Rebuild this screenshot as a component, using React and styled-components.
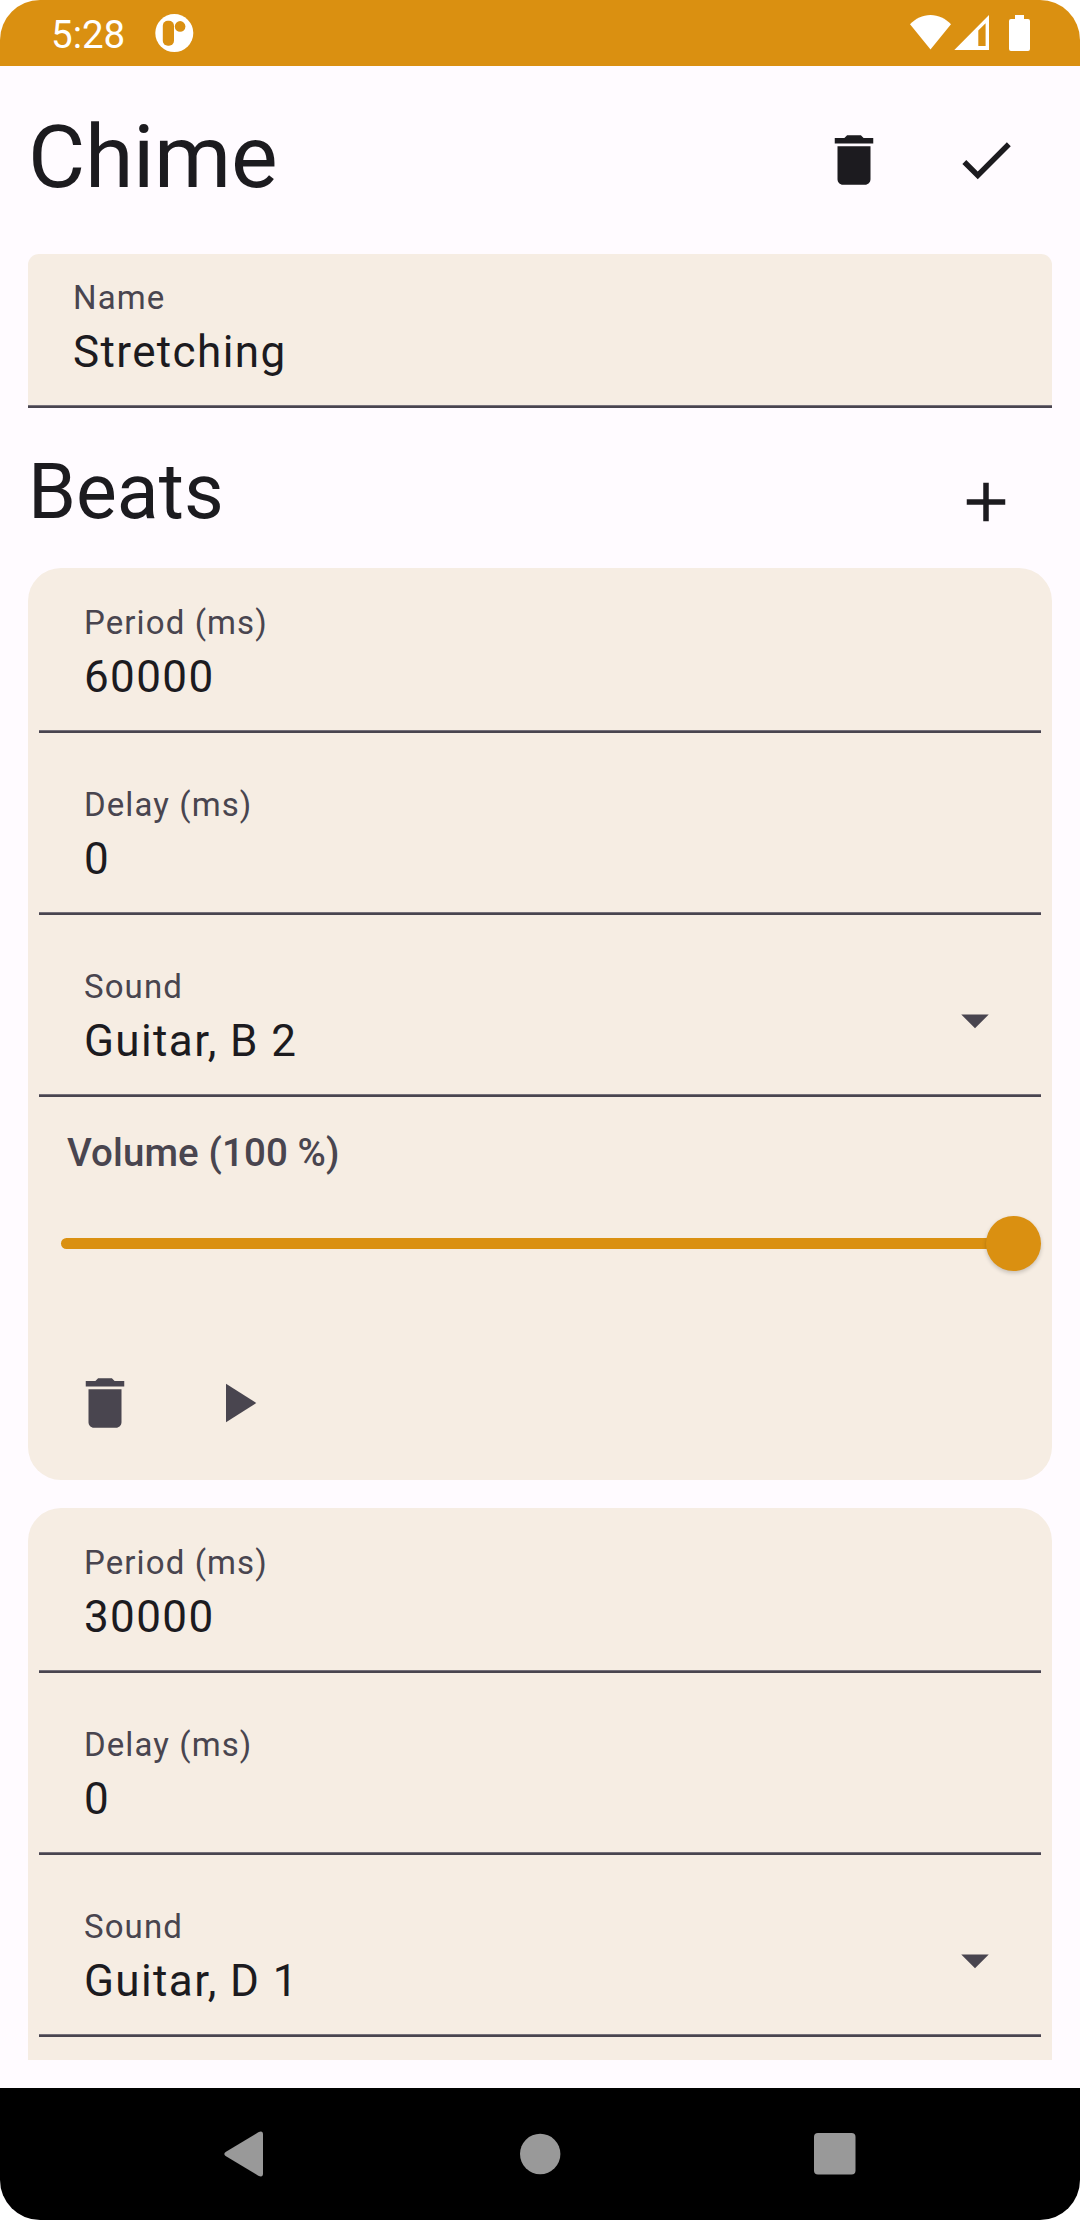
import React from 'react';
import styled, { createGlobalStyle } from 'styled-components';

const color = {
  primary: '#da9011',
  background: '#fffbff',
  surface: '#f6ede3',
  text: '#1c1b1f',
  muted: '#49454f',
  nav: '#999999',
};

const GlobalStyle = createGlobalStyle`
  * { box-sizing: border-box; }
  body { margin: 0; background: #fff; }
`;

const Screen = styled.div`
  width: 1080px;
  height: 2220px;
  display: flex;
  flex-direction: column;
  overflow: hidden;
  border-radius: 40px;
  background: ${color.background};
  color: ${color.text};
  font-family: Roboto, 'Liberation Sans', sans-serif;
`;

const StatusBar = styled.header`
  flex: none;
  height: 66px;
  padding: 0 50px 0 51px;
  display: flex;
  align-items: center;
  justify-content: space-between;
  background: ${color.primary};
  color: #fff;
`;

const StatusGroup = styled.div`
  display: flex;
  align-items: center;
  height: 66px;
`;

const Clock = styled.span`
  width: 104px;
  font-size: 38.5px;
  line-height: 65px;
  margin-top: 3px;
`;

const Glyph = styled.svg`
  display: block;
  flex: none;
  fill: currentColor;
`;

const Content = styled.main`
  flex: 1;
  min-height: 0;
  display: flex;
  flex-direction: column;
  gap: 28px;
  padding: 28px;
`;

const TitleRow = styled.div`
  flex: none;
  height: 132px;
  display: flex;
  align-items: flex-start;
`;

const Title = styled.h1`
  flex: 1;
  margin: 8px 0 0;
  font-weight: 400;
  font-size: 88px;
  line-height: 110px;
  letter-spacing: -0.35px;
`;

const Subtitle = styled.h2`
  flex: 1;
  margin: 7px 0 0;
  font-weight: 400;
  font-size: 77px;
  line-height: 99px;
`;

const IconButton = styled.button`
  width: 132px;
  height: 132px;
  padding: 0;
  border: 0;
  background: none;
  color: inherit;
  display: flex;
  align-items: center;
  justify-content: center;
`;

const Field = styled.div`
  flex: none;
  height: 154px;
  padding-left: 45px;
  display: flex;
  align-items: stretch;
  justify-content: space-between;
  border-radius: 11px 11px 0 0;
  background:
    linear-gradient(${color.muted}, ${color.muted}) bottom / 100% 2px no-repeat,
    linear-gradient(#757079, #757079) bottom / 100% 3px no-repeat,
    ${color.surface};
`;

const FieldText = styled.div`
  padding-top: 22px;
  display: flex;
  flex-direction: column;
`;

const FieldLabel = styled.span`
  font-size: 33px;
  line-height: 44px;
  letter-spacing: 1.1px;
  color: ${color.muted};
`;

const FieldValue = styled.span`
  font-size: 44px;
  line-height: 64px;
  letter-spacing: 1.375px;
`;

const DropdownSlot = styled.span`
  width: 132px;
  display: flex;
  align-items: center;
  justify-content: center;
  color: ${color.muted};
`;

const BeatSection = styled.section`
  flex: 1;
  min-height: 0;
  display: flex;
  flex-direction: column;
`;

const BeatList = styled.div`
  flex: 1;
  min-height: 0;
  overflow: hidden;
  display: flex;
  flex-direction: column;
  gap: 28px;
`;

const Card = styled.article`
  flex: none;
  height: 912px;
  padding: 11px;
  border-radius: 33px;
  background: ${color.surface};
  display: flex;
  flex-direction: column;
`;

const CardFields = styled.div`
  display: flex;
  flex-direction: column;
  gap: 28px;
`;

const VolumeLabel = styled.span`
  margin: 28px 0 0 28px;
  font-size: 38.5px;
  font-weight: 500;
  line-height: 55px;
  letter-spacing: 0.1px;
  color: ${color.muted};
`;

const Slider = styled.div`
  position: relative;
  height: 127px;
  padding: 0 28px 0 21.5px;
  display: flex;
  align-items: center;
`;

const Track = styled.div`
  flex: 1;
  height: 11px;
  border-radius: 6px;
  background: ${color.primary};
`;

const Thumb = styled.div`
  position: absolute;
  right: 0;
  top: 36px;
  width: 55px;
  height: 55px;
  border-radius: 50%;
  background: ${color.primary};
  box-shadow: 0 2px 4px rgba(0, 0, 0, 0.2);
`;

const Actions = styled.div`
  margin-top: 30px;
  display: flex;
  color: ${color.muted};
`;

const NavBar = styled.nav`
  flex: none;
  height: 132px;
  padding: 0 224px;
  display: flex;
  align-items: center;
  justify-content: space-between;
  background: #000;
  color: ${color.nav};
`;

const paths = {
  trash: 'M6 19c0 1.1.9 2 2 2h8c1.1 0 2-.9 2-2V7H6v12zM19 4h-3.5l-1-1h-5l-1 1H5v2h14V4z',
  check: 'M9 16.17L4.83 12l-1.42 1.41L9 19 21 7l-1.41-1.41z',
  plus: 'M19 13h-6v6h-2v-6H5v-2h6V5h2v6h6v2z',
  play: 'M8 5v14l11-7z',
  dropdown: 'M7 10l5 5 5-5z',
};

function Icon({ name }) {
  return (
    <Glyph width="66" height="66" viewBox="0 0 24 24">
      <path d={paths[name]} />
    </Glyph>
  );
}

function TextField({ label, value, dropdown }) {
  return (
    <Field>
      <FieldText>
        <FieldLabel>{label}</FieldLabel>
        <FieldValue>{value}</FieldValue>
      </FieldText>
      {dropdown && (
        <DropdownSlot>
          <Icon name="dropdown" />
        </DropdownSlot>
      )}
    </Field>
  );
}

function BeatControls({ volume }) {
  return (
    <>
      <VolumeLabel>Volume ({volume} %)</VolumeLabel>
      <Slider>
        <Track />
        <Thumb />
      </Slider>
      <Actions>
        <IconButton aria-label="Delete beat"><Icon name="trash" /></IconButton>
        <IconButton aria-label="Play beat"><Icon name="play" /></IconButton>
      </Actions>
    </>
  );
}

function BeatCard({ period, delay, sound, volume, controls }) {
  return (
    <Card>
      <CardFields>
        <TextField label="Period (ms)" value={period} />
        <TextField label="Delay (ms)" value={delay} />
        <TextField label="Sound" value={sound} dropdown />
      </CardFields>
      {controls && <BeatControls volume={volume} />}
    </Card>
  );
}

const beats = [
  { period: '60000', delay: '0', sound: 'Guitar, B 2', volume: 100, controls: true },
  { period: '30000', delay: '0', sound: 'Guitar, D 1', volume: 100, controls: false },
];

export default function App() {
  return (
    <>
      <GlobalStyle />
      <Screen>
        <StatusBar>
          <StatusGroup>
            <Clock>5:28</Clock>
            <Glyph width="39" height="66" viewBox="0 0 39 66">
              <circle cx="19.3" cy="33.1" r="19" />
              <rect x="7.8" y="20.8" width="11.200" height="25" rx="5" fill={color.primary} />
              <circle cx="25.1" cy="26.4" r="5.3" fill={color.primary} />
            </Glyph>
          </StatusGroup>
          <StatusGroup>
            <Glyph width="120" height="66" viewBox="910 0 120 66">
              <path d="M930.5 49.5L910 24.3C915.5 18.6 922.5 15 930.5 15S945.5 18.6 951 24.3z" />
              <path fillRule="evenodd" d="M954.3 50L989 15v35zM978.3 30.6V46h7.3V23.3z" />
              <path d="M1015 15h9v4h4a2 2 0 0 1 2 2v28a2 2 0 0 1-2 2h-17a2 2 0 0 1-2-2V21a2 2 0 0 1 2-2h4z" />
            </Glyph>
          </StatusGroup>
        </StatusBar>

        <Content>
          <TitleRow>
            <Title>Chime</Title>
            <IconButton aria-label="Delete chime"><Icon name="trash" /></IconButton>
            <IconButton aria-label="Save chime"><Icon name="check" /></IconButton>
          </TitleRow>
          <TextField label="Name" value="Stretching" />
          <BeatSection>
            <TitleRow>
              <Subtitle>Beats</Subtitle>
              <IconButton aria-label="Add beat"><Icon name="plus" /></IconButton>
            </TitleRow>
            <BeatList>
              {beats.map((beat) => (
                <BeatCard key={beat.period} {...beat} />
              ))}
            </BeatList>
          </BeatSection>
        </Content>

        <NavBar>
          <Glyph width="41" height="46" viewBox="0 0 41 46">
            <path d="M1.6 21.1L34.3 1.3Q39 -.8 39 3.5V42.5Q39 46.8 34.3 44.7L1.6 24.9Q-1 23 1.6 21.1z" />
          </Glyph>
          <Glyph width="42" height="42" viewBox="0 0 42 42">
            <circle cx="21.2" cy="21" r="20.2" />
          </Glyph>
          <Glyph width="42" height="42" viewBox="0 0 42 42">
            <rect width="41.5" height="41.5" rx="4" />
          </Glyph>
        </NavBar>
      </Screen>
    </>
  );
}
